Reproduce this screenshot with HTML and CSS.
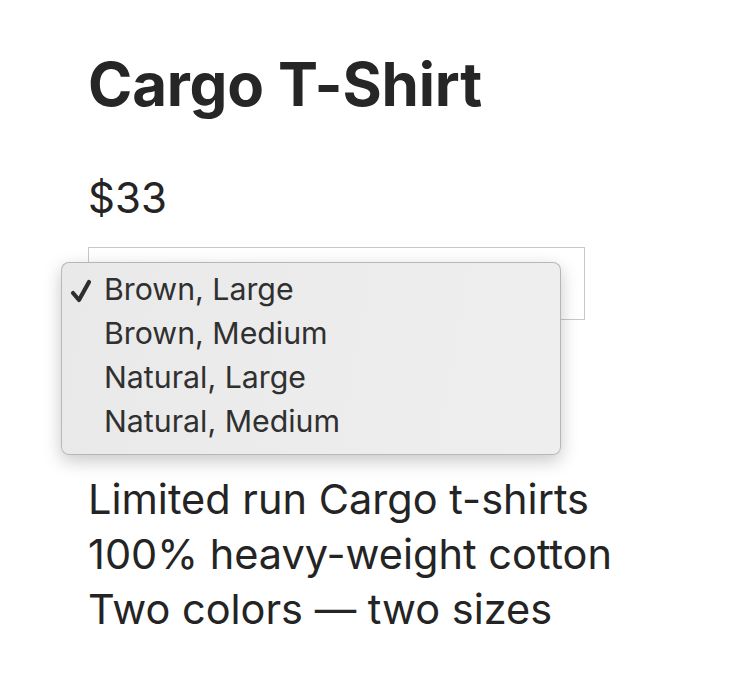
FILE: index.html
```html
<!DOCTYPE html>
<html lang="en">
<head>
  <meta charset="UTF-8" />
  <title>Cargo T-Shirt</title>
  <meta name="viewport" content="width=device-width, initial-scale=1" />
  <link rel="stylesheet" href="styles.css">
</head>
<body>
  <main class="product">
    <h1 class="title">Cargo T-Shirt</h1>
    <p class="price">$33</p>

    <!-- Variant picker, shown open -->
    <div class="variant">
      <div class="select-box"></div>
      <ul class="menu">
        <li class="option selected">
          <svg class="check" viewBox="0 0 22 24" width="22" height="24">
            <path d="M3 14 L9 21 L19 3" fill="none" stroke="#2e2e2e" stroke-width="4.2" stroke-linecap="round" stroke-linejoin="round"/>
          </svg>
          Brown, Large
        </li>
        <li class="option">Brown, Medium</li>
        <li class="option">Natural, Large</li>
        <li class="option">Natural, Medium</li>
      </ul>
    </div>

    <div class="desc">
      <p>Limited run Cargo t-shirts</p>
      <p>100% heavy-weight cotton</p>
      <p>Two colors — two sizes</p>
    </div>
  </main>
</body>
</html>
```

FILE: styles.css
```css
html, body {
  margin: 0; padding: 0; background: #fff;
  font-family: Inter, "Noto Sans", sans-serif; color: #242424;
}

.product {
  padding: 48px 0 0 88px;
}

.title {
  margin: 0; font-size: 60px; line-height: 72px; font-weight: 700;
  color: #262626; letter-spacing: -0.2px;
}

.price {
  margin: 53px 0 0; font-size: 42px; line-height: 50px; font-weight: 400;
}

.variant {
  position: relative; margin-top: 24px; width: 497px;
}

.select-box {
  height: 71px; border: 1px solid #c9c9c9; background: #fff;
}

.menu {
  position: absolute; top: 15px; left: -27px;
  width: 498px; height: 187px; margin: 0; padding: 4px 0 0;
  list-style: none; box-sizing: content-box;
  background: linear-gradient(100deg, #e9e9e9 0%, #ececec 50%, #eeeeee 100%);
  border: 1px solid rgba(0,0,0,0.22); border-radius: 8px;
  box-shadow: 0 6px 18px rgba(0,0,0,0.22);
}

.option {
  position: relative; padding-left: 42px;
  font-size: 30.3px; line-height: 44px; color: #303030;
}

.check {
  position: absolute; left: 8px; top: 12px;
}

.desc {
  margin-top: 152px;
}

.desc p {
  margin: 0; font-size: 41.5px; line-height: 55px;
}
```
